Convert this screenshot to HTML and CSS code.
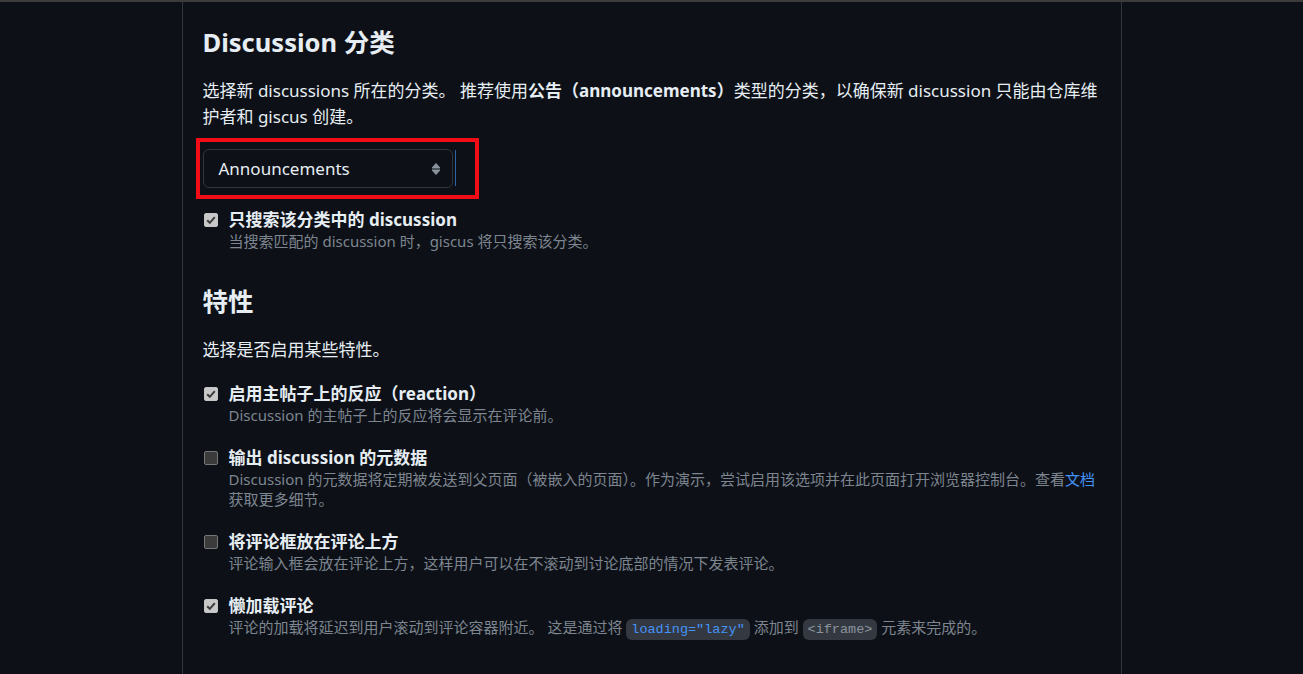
FILE: index.html
```html
<!DOCTYPE html>
<html lang="zh">

<head>
  <meta charset="UTF-8">
  <meta name="viewport" content="width=device-width, initial-scale=1.0">
  <title>giscus 配置</title>
  <link rel="stylesheet" href="styles.css">
</head>

<body>
  <div class="page">
    <h2 class="title">Discussion 分类</h2>
    <p class="text">选择新 discussions 所在的分类。 推荐使用<strong>公告（announcements）</strong>类型的分类，以确保新 discussion 只能由仓库维护者和 giscus 创建。</p>

    <div class="select-row">
      <div class="select">
        <span>Announcements</span>
        <svg class="arrows" width="10" height="14" viewBox="0 0 10 14">
          <path d="M1 6 5 1.5 9 6Z" fill="#8b949e" stroke="#8b949e" stroke-width="1" stroke-linejoin="round" />
          <path d="M1 8 5 12.5 9 8Z" fill="#8b949e" stroke="#8b949e" stroke-width="1" stroke-linejoin="round" />
        </svg>
      </div>
      <span class="caret"></span>
    </div>

    <div class="option">
      <span class="check on">
        <svg width="14" height="14" viewBox="0 0 14 14">
          <path d="M3.2 7.2 5.8 9.8 10.8 4.2" fill="none" stroke="#3b3b3b" stroke-width="2" />
        </svg>
      </span>
      <div>
        <div class="label">只搜索该分类中的 discussion</div>
        <div class="desc">当搜索匹配的 discussion 时，giscus 将只搜索该分类。</div>
      </div>
    </div>

    <h2 class="title second">特性</h2>
    <p class="text">选择是否启用某些特性。</p>

    <div class="option">
      <span class="check on">
        <svg width="14" height="14" viewBox="0 0 14 14">
          <path d="M3.2 7.2 5.8 9.8 10.8 4.2" fill="none" stroke="#3b3b3b" stroke-width="2" />
        </svg>
      </span>
      <div>
        <div class="label">启用主帖子上的反应（reaction）</div>
        <div class="desc">Discussion 的主帖子上的反应将会显示在评论前。</div>
      </div>
    </div>

    <div class="option">
      <span class="check"></span>
      <div>
        <div class="label">输出 discussion 的元数据</div>
        <div class="desc">Discussion 的元数据将定期被发送到父页面（被嵌入的页面）。作为演示，尝试启用该选项并在此页面打开浏览器控制台。查看<a href="#">文档</a>获取更多细节。</div>
      </div>
    </div>

    <div class="option">
      <span class="check"></span>
      <div>
        <div class="label">将评论框放在评论上方</div>
        <div class="desc">评论输入框会放在评论上方，这样用户可以在不滚动到讨论底部的情况下发表评论。</div>
      </div>
    </div>

    <div class="option">
      <span class="check on">
        <svg width="14" height="14" viewBox="0 0 14 14">
          <path d="M3.2 7.2 5.8 9.8 10.8 4.2" fill="none" stroke="#3b3b3b" stroke-width="2" />
        </svg>
      </span>
      <div>
        <div class="label">懒加载评论</div>
        <div class="desc">评论的加载将延迟到用户滚动到评论容器附近。 这是通过将 <code class="blue">loading="lazy"</code> 添加到 <code>&lt;iframe&gt;</code> 元素来完成的。</div>
      </div>
    </div>
  </div>
</body>

</html>
```

FILE: styles.css
```css
body {
  margin: 0;
  border-top: 2px solid #3c3c3c;
  background-color: #0d1117;
  color: #e6edf3;
  font-family: "Noto Sans", "Noto Sans CJK SC", sans-serif;
}

.page {
  width: 898px;
  min-height: 700px;
  margin: 0 auto;
  padding: 25px 20px 0;
  border-left: 1px solid #30363d;
  border-right: 1px solid #30363d;
}

.title {
  margin: 0;
  font-size: 25.5px;
  line-height: 30px;
  font-weight: 700;
}

.title.second {
  margin-top: 35px;
}

.text {
  margin: 21px 0 0;
  font-size: 17px;
  line-height: 26px;
}

.select-row {
  position: relative;
  display: flex;
  margin-top: 19px;
}

/* 红色标注框 */
.select-row::after {
  content: '';
  position: absolute;
  left: -7px;
  top: -11px;
  width: 275px;
  height: 53px;
  border: 4px solid #f20c16;
}

.select {
  display: flex;
  align-items: center;
  justify-content: space-between;
  box-sizing: border-box;
  width: 250px;
  height: 39px;
  padding: 0 11px 0 15px;
  border: 1px solid #30363d;
  border-radius: 6px;
  font-size: 17px;
}

.arrows {
  display: block;
}

.caret {
  width: 1px;
  height: 36px;
  margin: 1px 0 0 2px;
  background-color: #2f64a8;
}

.option {
  display: flex;
  margin-top: 22px;
}

.select-row + .option {
  margin-top: 21px;
}

.text + .option {
  margin-top: 20px;
}

.check {
  flex: none;
  box-sizing: border-box;
  width: 14px;
  height: 14px;
  margin: 4px 11px 0 1px;
  border: 1px solid #767676;
  border-radius: 2px;
  background-color: #3b3b3b;
}

.check.on {
  border-color: #c4c4c4;
  background-color: #c8c8c8;
}

.check svg {
  display: block;
  margin: -1px;
}

.label {
  font-size: 17px;
  line-height: 22px;
  font-weight: 700;
}

.desc {
  font-size: 15px;
  line-height: 20px;
  color: #7d8590;
}

.desc a {
  color: #4493f8;
  text-decoration: none;
}

code {
  padding: 3px 5px;
  border-radius: 6px;
  background-color: #343941;
  font-family: "Liberation Mono", monospace;
  font-size: 13.5px;
  color: #8b949e;
}

code.blue {
  color: #4493f8;
}
```
